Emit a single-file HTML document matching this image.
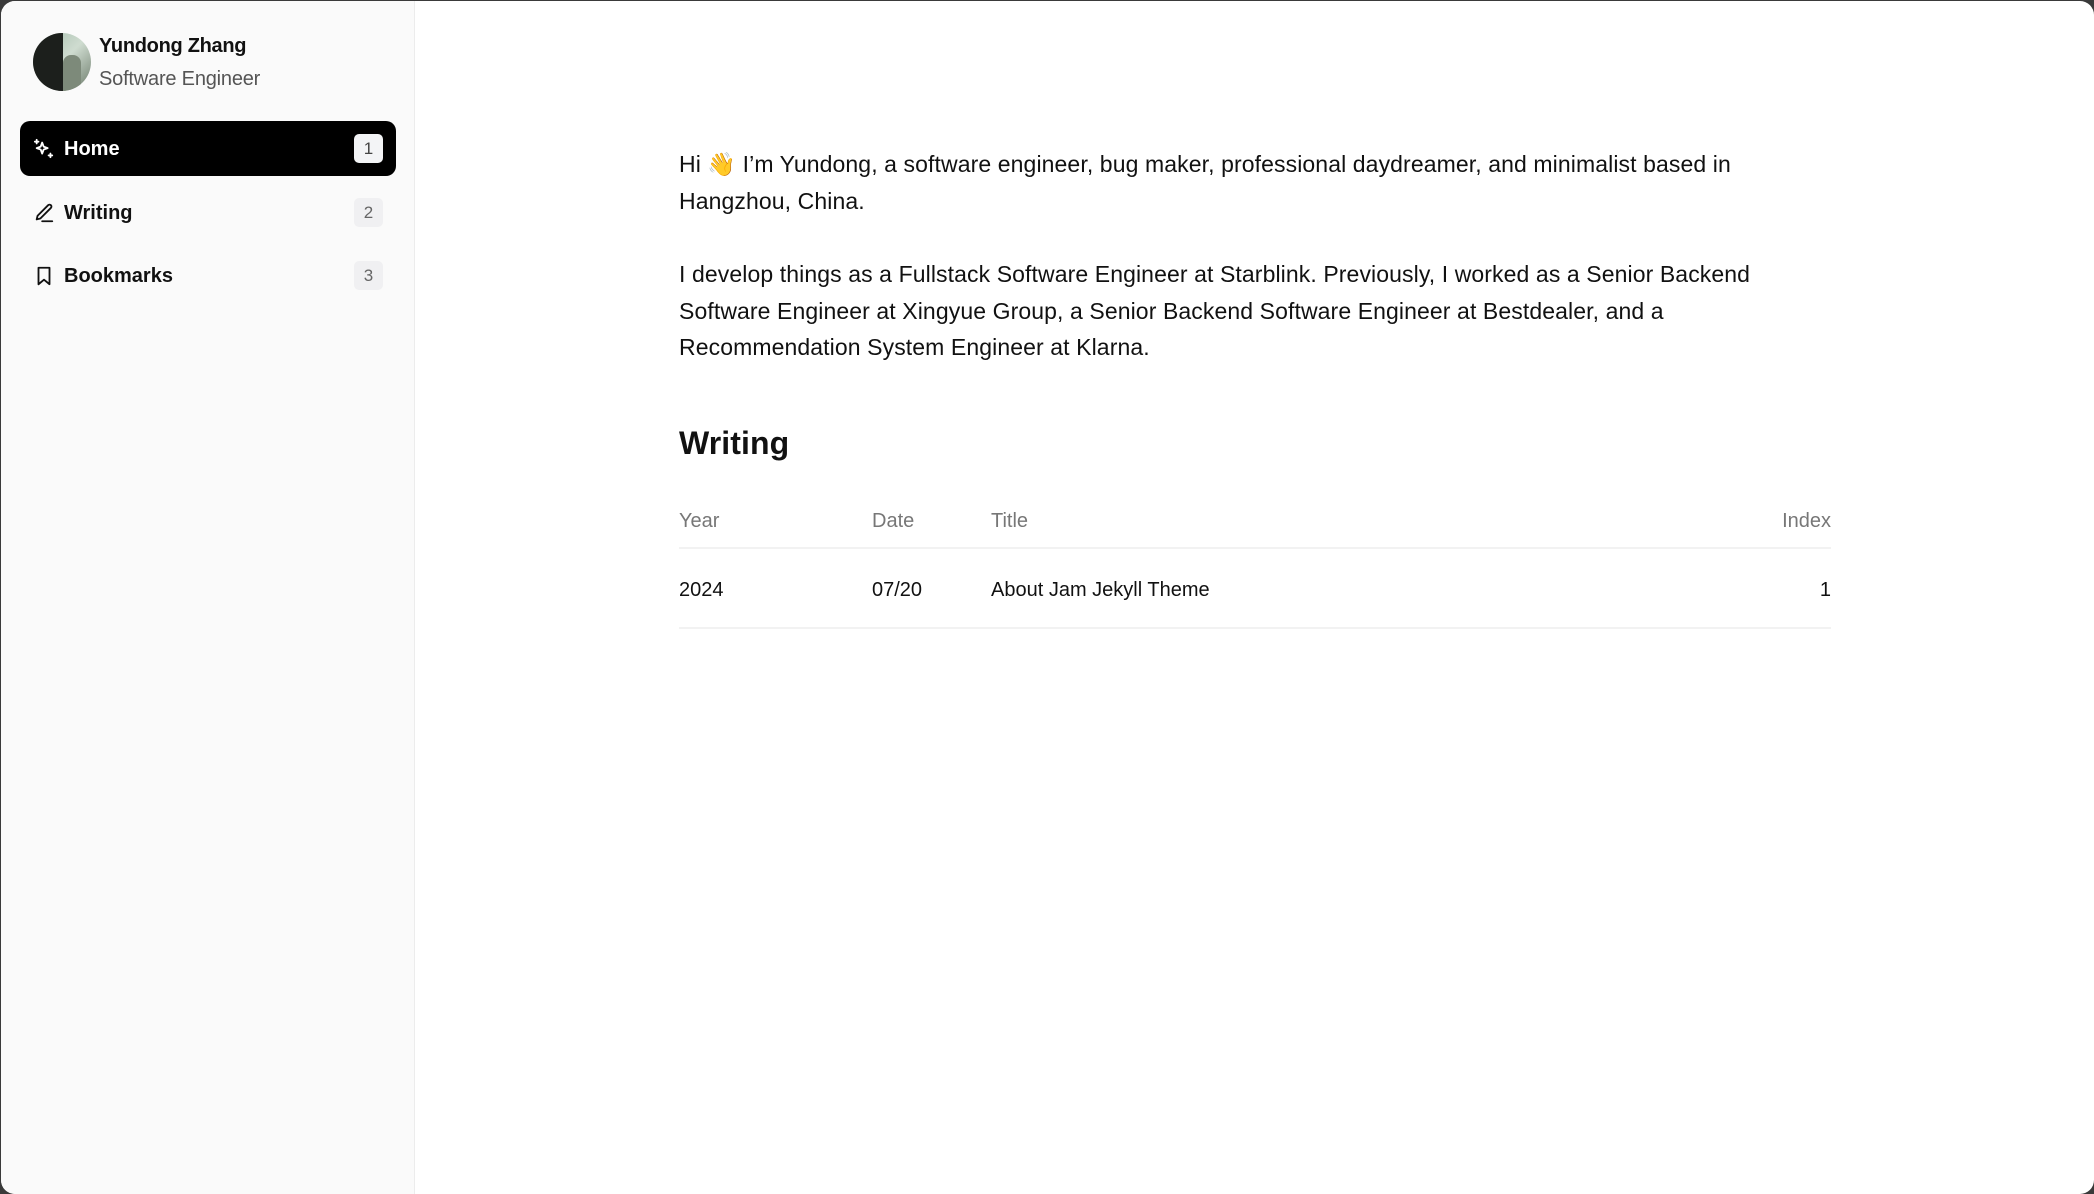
<!DOCTYPE html>
<html><head><meta charset="utf-8">
<style>
*{box-sizing:border-box;margin:0;padding:0}
html,body{width:2094px;height:1194px;overflow:hidden;background:#3a3a3a;font-family:"Liberation Sans",sans-serif;}
#win{position:absolute;left:1px;top:1px;right:0;bottom:0;background:#fff;border-radius:14px;overflow:hidden}
#side{position:absolute;left:0;top:0;bottom:0;width:414px;background:#fafafa;border-right:1px solid #ececec}
.av{position:absolute;left:32px;top:32px;width:58px;height:58px;border-radius:50%;overflow:hidden;background:linear-gradient(135deg,#9fb8a8,#cfdcd0 50%,#6b7a6a)}
.av:before{content:"";position:absolute;left:0;top:0;width:30px;height:58px;background:#1c1f1c}
.av:after{content:"";position:absolute;left:30px;top:22px;width:18px;height:36px;background:#7d8a7a;border-radius:8px 8px 0 0}
.name{position:absolute;left:98px;top:34px;font-size:20px;font-weight:bold;color:#111;letter-spacing:-0.3px}
.role{position:absolute;left:98px;top:67px;font-size:20px;color:#555;letter-spacing:-0.2px}
.nav{position:absolute;left:19px;width:376px;height:55px;border-radius:10px;display:flex;align-items:center;font-size:20px;font-weight:bold;color:#111}
.nav svg{position:absolute;left:13px;top:17px}
.nav span.t{position:absolute;left:44px;top:17px}
.nav .b{position:absolute;left:334px;width:29px;height:29px;border-radius:5px;background:#f0f0f2;color:#666;font-weight:normal;font-size:17px;display:flex;align-items:center;justify-content:center}
.nav.on{background:#000;color:#fff}
.nav.on .b{background:#f3f4f6;color:#444}
#main{position:absolute;left:678px;top:0;width:1152px;color:#111;font-size:23px;letter-spacing:0.1px}
p{line-height:36.7px;position:absolute;left:0;width:1152px}
h2{position:absolute;left:0;top:424px;font-size:32px;font-weight:bold}
.row{position:absolute;left:0;width:1152px;height:20px;font-size:20px;letter-spacing:0}
.row span{position:absolute;top:0}
.hd{color:#777}
.line{position:absolute;left:0;width:1152px;height:2px;background:#f2f2f2}
</style></head><body>
<div id="win">
<div id="side">
<div class="av"></div>
<div class="name">Yundong Zhang</div>
<div class="role">Software Engineer</div>
<div class="nav on" style="top:120px">
<svg width="22" height="22" viewBox="0 0 24 24" fill="none" stroke="#fff" stroke-width="2" stroke-linejoin="round" stroke-linecap="round"><path d="M10 5l1.6 4.4L16 11l-4.4 1.6L10 17l-1.6-4.4L4 11l4.4-1.6z"/><path d="M4 2v4M2 4h4M19 17v4M17 19h4"/></svg>
<span class="t">Home</span><div class="b">1</div></div>
<div class="nav" style="top:184px">
<svg width="22" height="22" viewBox="0 0 24 24" fill="none" stroke="#111" stroke-width="2" stroke-linejoin="round" stroke-linecap="round"><path d="M16.5 3.5a2.1 2.1 0 013 3L8 18l-4 1 1-4z"/><path d="M10 21h11"/></svg>
<span class="t">Writing</span><div class="b">2</div></div>
<div class="nav" style="top:247px">
<svg width="22" height="22" viewBox="0 0 24 24" fill="none" stroke="#111" stroke-width="2" stroke-linejoin="round"><path d="M6 3h12v18l-6-5-6 5z"/></svg>
<span class="t">Bookmarks</span><div class="b">3</div></div>
</div>
<div id="main">
<p style="top:145px">Hi 👋 I’m Yundong, a software engineer, bug maker, professional daydreamer, and minimalist based in Hangzhou, China.</p>
<p style="top:255px">I develop things as a Fullstack Software Engineer at Starblink. Previously, I worked as a Senior Backend Software Engineer at Xingyue Group, a Senior Backend Software Engineer at Bestdealer, and a Recommendation System Engineer at Klarna.</p>
<h2>Writing</h2>
<div class="row hd" style="top:509px"><span style="left:0">Year</span><span style="left:193px">Date</span><span style="left:312px">Title</span><span style="right:0">Index</span></div>
<div class="line" style="top:546px"></div>
<div class="row" style="top:578px"><span style="left:0">2024</span><span style="left:193px">07/20</span><span style="left:312px">About Jam Jekyll Theme</span><span style="right:0">1</span></div>
<div class="line" style="top:626px"></div>
</div>
</div>
</body></html>
